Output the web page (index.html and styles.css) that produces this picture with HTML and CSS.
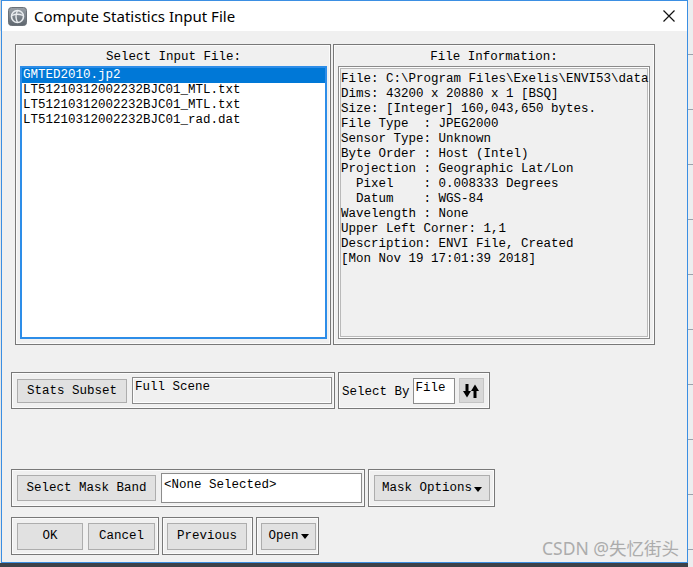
FILE: index.html
```html
<!DOCTYPE html>
<html>
<head>
<meta charset="utf-8">
<link rel="stylesheet" href="styles.css">
</head>
<body>
<div class="screen">
  <div class="window">
    <div class="titlebar">
      <svg class="app-icon" width="19" height="19" viewBox="0 0 19 19">
        <defs>
          <linearGradient id="g" x1="0" y1="0" x2="0" y2="1">
            <stop offset="0" stop-color="#9aa1a8"/>
            <stop offset="1" stop-color="#5d656d"/>
          </linearGradient>
        </defs>
        <rect x="0.5" y="0.5" width="18" height="18" rx="3" fill="url(#g)" stroke="#6b7178"/>
        <circle cx="9.5" cy="9.5" r="6" fill="none" stroke="#e9ecef" stroke-width="1.6"/>
        <path d="M4 8.5 Q9.5 6 15 8.5" fill="none" stroke="#e9ecef" stroke-width="1.3"/>
        <path d="M9.5 3.5 Q6.5 9.5 9.5 15.5" fill="none" stroke="#e9ecef" stroke-width="1.3"/>
      </svg>
      <span class="title">Compute Statistics Input File</span>
      <svg class="close" width="12" height="12" viewBox="0 0 12 12">
        <path d="M0.5 0.5 L11.5 11.5 M11.5 0.5 L0.5 11.5" stroke="#111" stroke-width="1.2"/>
      </svg>
    </div>
    <div class="client">
      <div class="row-top">
        <div class="panel panel-input">
          <div class="panel-head">Select Input File:</div>
          <div class="listbox">
            <div class="item selected">GMTED2010.jp2</div>
            <div class="item">LT51210312002232BJC01_MTL.txt</div>
            <div class="item">LT51210312002232BJC01_MTL.txt</div>
            <div class="item">LT51210312002232BJC01_rad.dat</div>
          </div>
        </div>
        <div class="panel panel-info">
          <div class="panel-head">File Information:</div>
          <div class="infobox">File: C:\Program Files\Exelis\ENVI53\data
Dims: 43200 x 20880 x 1 [BSQ]
Size: [Integer] 160,043,650 bytes.
File Type  : JPEG2000
Sensor Type: Unknown
Byte Order : Host (Intel)
Projection : Geographic Lat/Lon
  Pixel    : 0.008333 Degrees
  Datum    : WGS-84
Wavelength : None
Upper Left Corner: 1,1
Description: ENVI File, Created
[Mon Nov 19 17:01:39 2018]</div>
        </div>
      </div>

      <div class="row row-subset">
        <div class="group g-subset">
          <div class="btn b-subset">Stats Subset</div>
          <div class="field f-scene">Full Scene</div>
        </div>
        <div class="group g-selectby">
          <span class="label">Select By</span>
          <div class="field f-file">File</div>
          <div class="btn b-sort">
            <svg width="16" height="16" viewBox="0 0 16 16">
              <rect x="2.5" y="1" width="3" height="8" fill="#000"/>
              <polygon points="0,8 8,8 4,14.5" fill="#000"/>
              <rect x="10.5" y="7" width="3" height="8" fill="#000"/>
              <polygon points="8,8 16,8 12,1.5" fill="#000"/>
            </svg>
          </div>
        </div>
      </div>

      <div class="row row-mask">
        <div class="group g-mask">
          <div class="btn b-mask">Select Mask Band</div>
          <div class="field f-none">&lt;None Selected&gt;</div>
        </div>
        <div class="group g-maskopt">
          <div class="btn b-maskopt">Mask Options<span class="tri"></span></div>
        </div>
      </div>

      <div class="row row-actions">
        <div class="group g-okc">
          <div class="btn b-ok">OK</div>
          <div class="btn b-cancel">Cancel</div>
        </div>
        <div class="group g-prev">
          <div class="btn b-prev">Previous</div>
        </div>
        <div class="group g-open">
          <div class="btn b-open">Open<span class="tri"></span></div>
        </div>
      </div>

      <div class="watermark">CSDN @失忆街头</div>
    </div>
  </div>
  <div class="side"></div>
</div>
</body>
</html>
```

FILE: styles.css
```css
* { box-sizing: border-box; }

html, body {
  margin: 0;
  padding: 0;
}

body {
  width: 693px;
  height: 567px;
  overflow: hidden;
  background: #4a4f55;
  font-family: "Liberation Mono", "DejaVu Sans Mono", monospace;
  font-size: 12.5px;
  color: #000;
}

.screen {
  display: flex;
  height: 567px;
  background: linear-gradient(#cdd3d9 0 31px, #e6e6e6 31px 563px, #3d4148 563px);
}

.window {
  width: 687px;
  height: 563px;
  margin-left: 1px;
  border: 1px solid #3b8fe3;
  background: #f0f0f0;
  display: flex;
  flex-direction: column;
  position: relative;
}

.side {
  flex: 1;
  background: repeating-linear-gradient(#eceeef 0 54px, #9aa3ad 54px 55px);
}

/* title bar */
.titlebar {
  height: 30px;
  background: #fff;
  display: flex;
  align-items: center;
  padding-left: 6px;
  flex: none;
}

.app-icon { flex: none; }

.title {
  margin-left: 7px;
  font-family: "Noto Sans", "DejaVu Sans", sans-serif;
  font-size: 15px;
  color: #000;
}

.close {
  margin-left: auto;
  margin-right: 12px;
}

/* client area */
.client {
  flex: 1;
  display: flex;
  flex-direction: column;
  position: relative;
}

.row-top {
  display: flex;
  gap: 2px;
  margin: 13px 0 0 13px;
}

.panel {
  height: 301px;
  border: 1px solid #787878;
  box-shadow: inset 0 0 0 1px #fbfbfb;
  display: flex;
  flex-direction: column;
  padding: 0 3px 5px 4px;
}

.panel-input { width: 316px; }

.panel-info {
  width: 322px;
  padding-right: 4px;
}

.panel-head {
  height: 21px;
  padding-top: 5px;
  line-height: 15px;
  text-align: center;
  flex: none;
}

.listbox {
  flex: 1;
  background: #fff;
  border: 2px solid #2d8de8;
}

.item {
  height: 15px;
  line-height: 15px;
  padding-left: 1px;
  white-space: pre;
}

.item.selected {
  background: #0078d7;
  color: #fff;
}

.infobox {
  flex: 1;
  border: 1px solid #8a8a8a;
  box-shadow: inset 0 0 0 1px #fdfdfd, inset 0 0 0 2px #b9b9b9;
  padding: 5px 0 0 2px;
  line-height: 15px;
  white-space: pre;
  overflow: visible;
}

/* control rows */
.row {
  display: flex;
  gap: 3px;
  margin-left: 9px;
}

.row-subset { margin-top: 27px; }
.row-mask { margin-top: 60px; }
.row-actions { margin-top: 10px; }

.group {
  border: 1px solid #787878;
  box-shadow: inset 0 0 0 1px #fbfbfb;
  display: flex;
  align-items: center;
  padding: 0 3px 0 5px;
  gap: 5px;
  height: 38px;
}

.row-subset .group { height: 37px; }

.btn {
  background: #e1e1e1;
  border: 1px solid #adadad;
  display: flex;
  align-items: center;
  justify-content: center;
  line-height: 15px;
  white-space: pre;
  flex: none;
}

.field {
  border: 1px solid #8c8c8c;
  box-shadow: inset 0 0 0 1px #fdfdfd;
  padding: 2px 0 0 2px;
  line-height: 15px;
  white-space: pre;
  flex: none;
  align-self: center;
}

.g-subset { width: 324px; }
.b-subset { width: 110px; height: 24px; padding-top: 1px; }
.f-scene { width: 200px; height: 27px; background: #f0f0f0; }

.g-selectby { width: 152px; gap: 3px; padding-left: 3px; }
.label { line-height: 15px; padding-top: 3px; }
.f-file { width: 42px; height: 26px; background: #fff; }
.b-sort {
  width: 25px;
  height: 25px;
  margin-left: 1px;
  background: #d8d8d8;
  border-color: #c4c4c4;
}

.g-mask { width: 354px; }
.b-mask { width: 139px; height: 26px; padding-top: 1px; }
.f-none { width: 201px; height: 30px; background: #fff; padding-top: 4px; }

.g-maskopt { width: 127px; }
.b-maskopt { width: 116px; height: 26px; padding-top: 1px; }

.g-okc { width: 148px; }
.b-ok { width: 66px; height: 27px; }
.b-cancel { width: 67px; height: 27px; }

.g-prev { width: 91px; padding-left: 4px; }
.b-prev { width: 80px; height: 27px; }

.g-open { width: 63px; padding-left: 4px; }
.b-open { width: 55px; height: 27px; }

.tri {
  width: 0;
  height: 0;
  border-left: 4px solid transparent;
  border-right: 4px solid transparent;
  border-top: 5px solid #000;
  margin-left: 2px;
  margin-top: 1px;
}

.watermark {
  position: absolute;
  right: 8px;
  bottom: 4px;
  font-family: "Noto Sans", "Noto Sans CJK SC", sans-serif;
  font-size: 17.5px;
  color: #acacac;
  line-height: 20px;
}
```
